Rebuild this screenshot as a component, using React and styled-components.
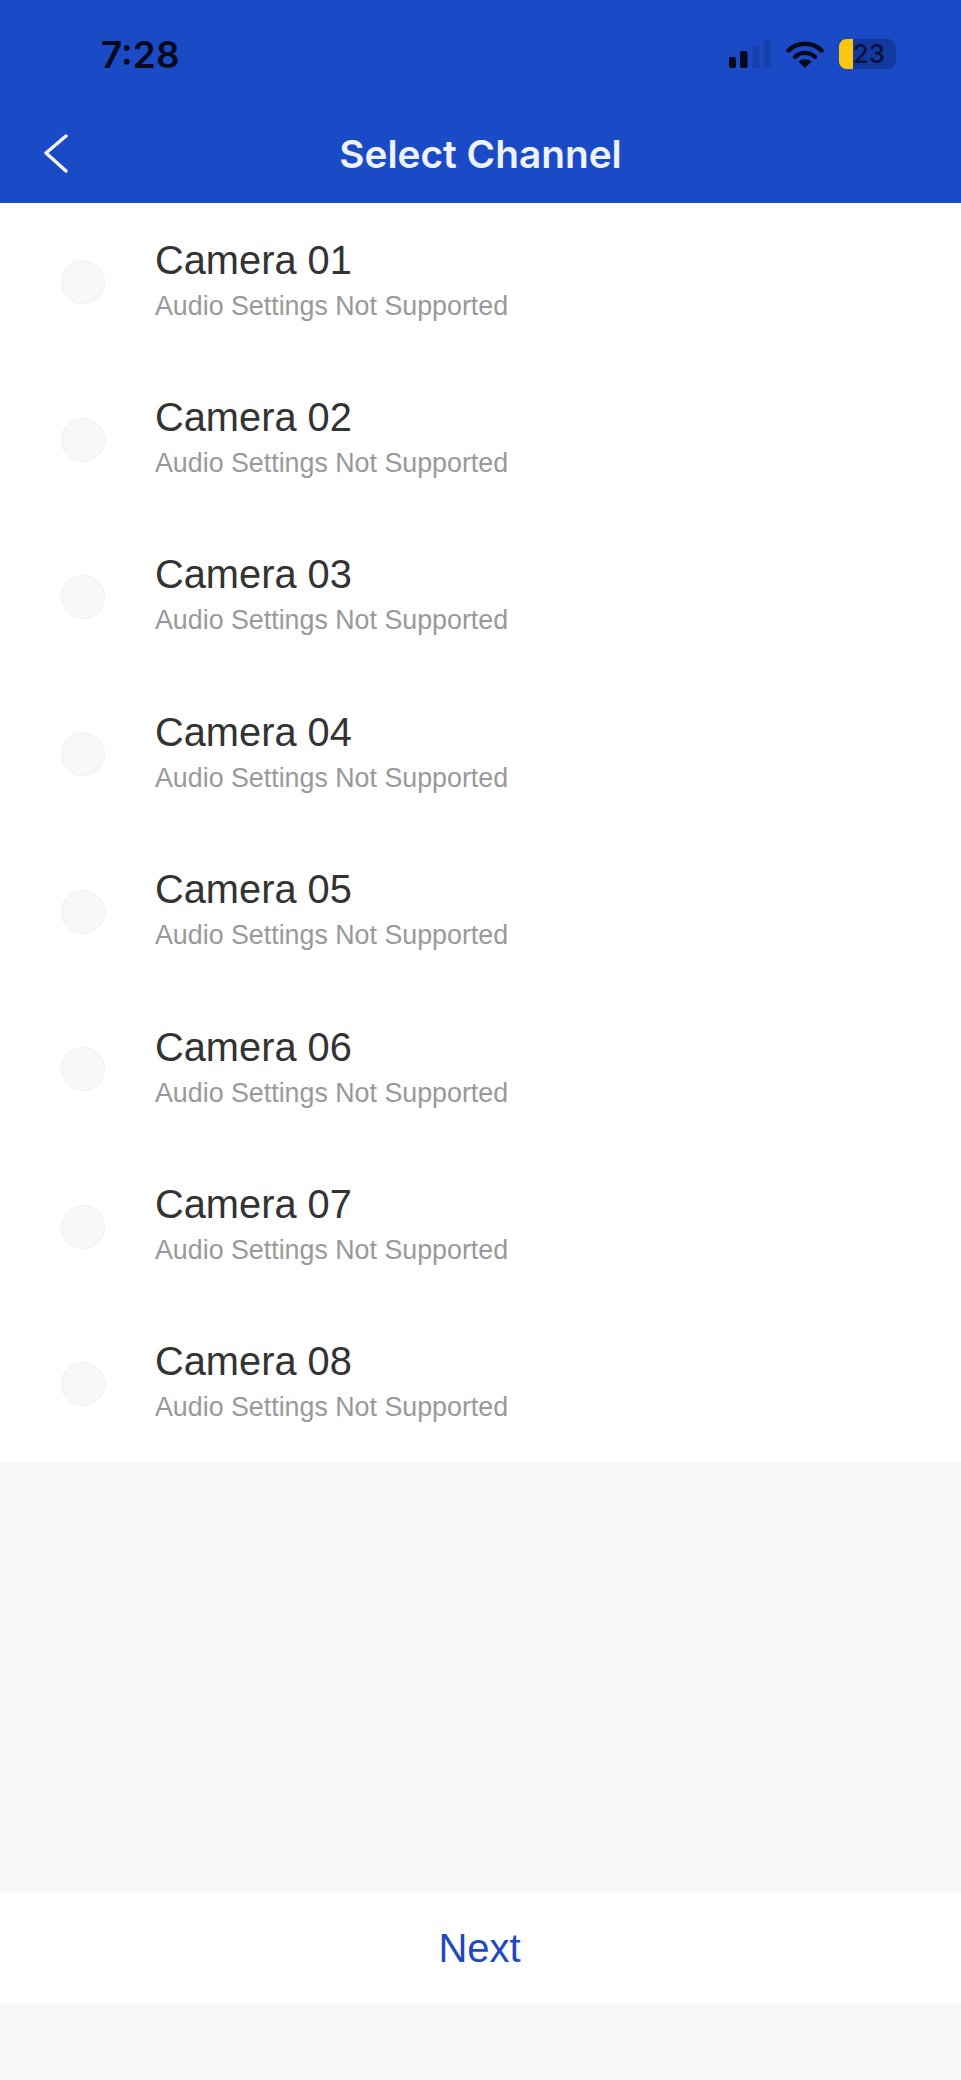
import React from "react";
import styled, { createGlobalStyle } from "styled-components";

const Global = createGlobalStyle`
  html, body { margin: 0; padding: 0; background: #f8f8f8; }
  * { box-sizing: border-box; }
`;
const Page = styled.div`
  width: 961px; height: 2080px; display: flex; flex-direction: column;
  background: #f8f8f8; font-family: "Liberation Sans", Arial, sans-serif; overflow: hidden;
`;
const Header = styled.header`
  height: 203px; background: #1a4ac6; display: flex; flex-direction: column; flex: none;
`;
const StatusBar = styled.div`
  height: 108px; display: flex; align-items: center; justify-content: space-between;
  padding: 0 60px 0 101px;
`;
const Time = styled.span`
  font-family: Inter, sans-serif; font-weight: 600; font-size: 37px; color: #040a1c; line-height: 1;
`;
const StatusIcons = styled.div`
  display: flex; align-items: center; gap: 15px;
`;
const BatteryWrap = styled.div`
  position: relative; width: 62px; height: 32px;
`;
const BatteryText = styled.span`
  position: absolute; left: 13px; top: 0; width: 34px; height: 32px; line-height: 32px; text-align: center;
  font-family: Inter, sans-serif; font-size: 26px; font-weight: 500; color: #06103a;
`;
const NavBar = styled.div`
  flex: 1; position: relative; display: flex; align-items: center; justify-content: center; padding-bottom: 4px;
`;
const Back = styled.svg`
  position: absolute; left: 42px; top: 25px;
`;
const Title = styled.h1`
  margin: 0; font-family: Inter, sans-serif; font-weight: 600; font-size: 38.8px; color: #eef2fd;
`;
const List = styled.div`
  background: #fff; flex: none; display: grid; grid-auto-rows: 157.4px;
`;
const Row = styled.div`
  display: flex; align-items: center; padding-left: 61px;
`;
const Radio = styled.span`
  width: 44px; height: 44px; margin-top: 1px; border-radius: 50%; background: #f8f8f8; border: 1.5px solid #f1f1f1; flex: none;
`;
const Texts = styled.div`
  margin-left: 50px; display: flex; flex-direction: column; gap: 7px; margin-top: -5px;
`;
const Name = styled.div`
  font-size: 39.8px; line-height: 46px; color: #333;
`;
const Sub = styled.div`
  font-size: 26.8px; line-height: 32px; color: #999;
`;
const Spacer = styled.div`
  flex: 1;
`;
const NextBar = styled.div`
  height: 111px; background: #fff; flex: none; margin-bottom: 76px; display: flex; align-items: center; justify-content: center;
  font-size: 40px; color: #2049c0; padding-right: 2px;
`;

const cameras = ["01", "02", "03", "04", "05", "06", "07", "08"];

export default function App() {
  return (
    <Page>
      <Global />
      <Header>
        <StatusBar>
          <Time>7:28</Time>
          <StatusIcons>
            <svg width="42" height="28" viewBox="0 0 42 28">
              <rect x="0" y="17" width="7" height="11" rx="2" fill="#040a1c" />
              <rect x="11" y="11" width="7.5" height="17" rx="2" fill="#040a1c" />
              <rect x="23" y="6" width="7.5" height="22" rx="2" fill="#1640ae" />
              <rect x="34.5" y="0" width="7.5" height="28" rx="2" fill="#1640ae" />
            </svg>
            <svg width="38" height="28" viewBox="0 0 38 28" fill="none">
              <path d="M2.5 10.5C11.5 1.5 26.5 1.5 35.5 10.5" stroke="#040a1c" strokeWidth="4.4" strokeLinecap="round" />
              <path d="M9 17C14.5 11.5 23.5 11.5 29 17" stroke="#040a1c" strokeWidth="4.4" strokeLinecap="round" />
              <path d="M19 28L12.5 21.5C16 18.5 22 18.5 25.5 21.5Z" fill="#040a1c" />
            </svg>
            <BatteryWrap>
              <svg width="62" height="32" viewBox="0 0 62 32">
                <path d="M10 1H48C53 1 57 5 57 10V22C57 27 53 31 48 31H10Z" fill="#123a9e" />
                <path d="M14 1H8C3.5 1 0 4.5 0 9V23C0 27.5 3.5 31 8 31H14Z" fill="#fcc60e" />
                <path d="M59 12C61 13 61 19 59 20Z" fill="#1640ae" />
              </svg>
              <BatteryText>23</BatteryText>
            </BatteryWrap>
          </StatusIcons>
        </StatusBar>
        <NavBar>
          <Back width="28" height="40" viewBox="0 0 28 40" fill="none">
            <path d="M24 3L4 20L24 38" stroke="#f2f5fe" strokeWidth="3.4" strokeLinecap="round" strokeLinejoin="round" />
          </Back>
          <Title>Select Channel</Title>
        </NavBar>
      </Header>
      <List>
        {cameras.map((c) => (
          <Row key={c}>
            <Radio />
            <Texts>
              <Name>Camera {c}</Name>
              <Sub>Audio Settings Not Supported</Sub>
            </Texts>
          </Row>
        ))}
      </List>
      <Spacer />
      <NextBar>Next</NextBar>
    </Page>
  );
}
